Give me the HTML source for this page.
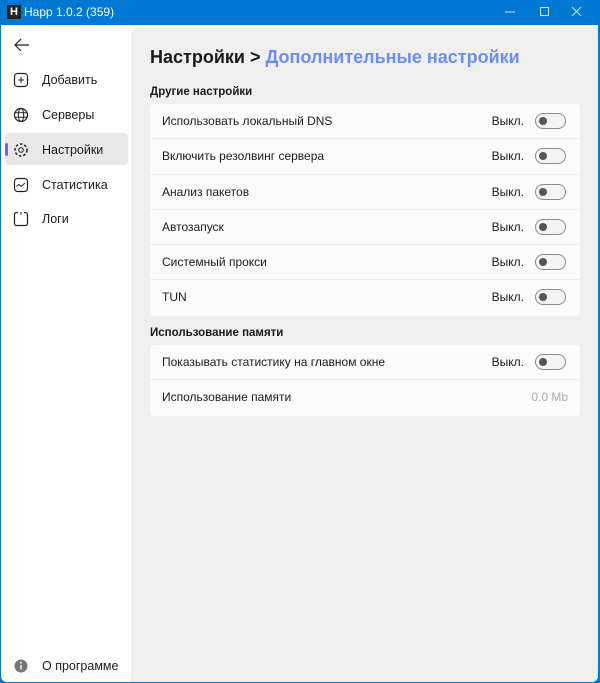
<!DOCTYPE html>
<html><head><meta charset="utf-8"><style>
*{box-sizing:border-box;margin:0;padding:0}
body{width:600px;height:683px;overflow:hidden;font-family:"Segoe UI","Liberation Sans",sans-serif;background:#0078d4;position:relative;font-size:12px;color:#1a1a1a}
.title{position:absolute;left:0;top:0;width:600px;height:25px;color:#fff;font-size:12px}
.title .logo{position:absolute;left:7px;top:5px;width:14px;height:14px;background:#222;color:#fff;font-weight:bold;font-size:11px;text-align:center;line-height:14px}
.title .t{position:absolute;left:24px;top:5px}
.win{position:absolute;left:1px;top:25px;width:597px;height:657px;background:#fff;border-radius:0 0 6px 6px;overflow:hidden}
.side{position:absolute;left:0;top:0;width:130px;height:100%}
.nav{position:absolute;left:4px;width:123px;height:32px;border-radius:4px}
.nav.sel{background:#e8e8e8}
.nav.sel:before{content:"";position:absolute;left:0;top:10px;width:3px;height:13px;background:#7a62e8;border-radius:2px}
.nav span{position:absolute;left:37px;top:10px;font-size:12.5px}
.nav svg{position:absolute;left:8px;top:9px}
.main{position:absolute;left:130px;top:3px;right:0;bottom:0;background:#efefef;border-radius:8px 0 0 0}
h1{position:absolute;left:19px;top:19px;font-size:18px;font-weight:600;color:#1a1a1a;white-space:nowrap}
h1 b{font-weight:600;color:#6d8ef0}
.h2{position:absolute;left:19px;font-size:11.5px;font-weight:600}
.card{position:absolute;left:19px;width:430px;background:#fbfbfb;border-radius:4px}
.row{height:35.3px;border-bottom:1px solid #ececec;position:relative}
.row:last-child{border-bottom:none}
.row .l{position:absolute;left:12px;top:10px;font-size:12px}
.row .v{position:absolute;right:56px;top:10px;font-size:12px}
.tg{position:absolute;right:14px;top:9px;width:31px;height:16px;border:1px solid #8a8a8a;border-radius:8px;background:#f4f4f4}
.tg:after{content:"";position:absolute;left:3px;top:3px;width:8px;height:8px;border-radius:50%;background:#555}
</style></head><body>
<div class="title"><div class="logo">H</div><div class="t">Happ 1.0.2 (359)</div>
<svg style="position:absolute;left:505px;top:6px" width="90" height="12"><line x1="0" y1="6" x2="10" y2="6" stroke="#cfe3f7"/><rect x="35.5" y="1.5" width="8" height="8" fill="none" stroke="#cfe3f7"/><path d="M67 1l9 9M76 1l-9 9" stroke="#cfe3f7"/></svg></div>
<div class="win">
<div class="side">
<svg style="position:absolute;left:13px;top:13px" width="16" height="14"><path d="M15 7H1M7 1L1 7l6 6" fill="none" stroke="#222" stroke-width="1.2"/></svg>
<div class="nav" style="top:38px"><svg width="17" height="17"><rect x="1.5" y="1.5" width="13" height="13" rx="3" fill="none" stroke="#222" stroke-width="1.2"/><path d="M8 5v6M5 8h6" stroke="#222"/></svg><span>Добавить</span></div>
<div class="nav" style="top:73px"><svg width="17" height="17"><circle cx="8" cy="8" r="6.5" fill="none" stroke="#222" stroke-width="1.2"/><ellipse cx="8" cy="8" rx="2.7" ry="6.5" fill="none" stroke="#222"/><path d="M1.5 5.8h13M1.5 10.2h13" stroke="#222"/></svg><span>Серверы</span></div>
<div class="nav sel" style="top:108px"><svg width="17" height="17"><circle cx="8" cy="8" r="2.3" fill="none" stroke="#222"/><circle cx="8" cy="8" r="6" fill="none" stroke="#222" stroke-width="1.5" stroke-dasharray="2.6 1.9"/></svg><span>Настройки</span></div>
<div class="nav" style="top:143px"><svg width="17" height="17"><rect x="1.5" y="1.5" width="13" height="13" rx="3" fill="none" stroke="#222" stroke-width="1.2"/><path d="M3.5 9.5l2.5-2 2 2 4-3.5" fill="none" stroke="#222"/></svg><span>Статистика</span></div>
<div class="nav" style="top:177px"><svg width="17" height="17"><path d="M5 1.5H3.5a2 2 0 0 0-2 2v9a2 2 0 0 0 2 2h9a2 2 0 0 0 2-2v-9a2 2 0 0 0-2-2H11" fill="none" stroke="#222" stroke-width="1.2"/><path d="M8 1v3" stroke="#222"/></svg><span>Логи</span></div>
<div class="nav" style="top:624px"><svg width="17" height="17"><circle cx="8" cy="8" r="6.5" fill="#777"/><path d="M8 7v4.5" stroke="#fff" stroke-width="1.4"/><circle cx="8" cy="4.8" r=".9" fill="#fff"/></svg><span>О программе</span></div>
</div>
<div class="main">
<h1>Настройки &gt; <b>Дополнительные настройки</b></h1>
<div class="h2" style="top:58px">Другие настройки</div>
<div class="card" style="top:76px">
<div class="row"><span class="l">Использовать локальный DNS</span><span class="v">Выкл.</span><div class="tg"></div></div>
<div class="row"><span class="l">Включить резолвинг сервера</span><span class="v">Выкл.</span><div class="tg"></div></div>
<div class="row"><span class="l">Анализ пакетов</span><span class="v">Выкл.</span><div class="tg"></div></div>
<div class="row"><span class="l">Автозапуск</span><span class="v">Выкл.</span><div class="tg"></div></div>
<div class="row"><span class="l">Системный прокси</span><span class="v">Выкл.</span><div class="tg"></div></div>
<div class="row"><span class="l">TUN</span><span class="v">Выкл.</span><div class="tg"></div></div>
</div>
<div class="h2" style="top:299px">Использование памяти</div>
<div class="card" style="top:317px">
<div class="row"><span class="l">Показывать статистику на главном окне</span><span class="v">Выкл.</span><div class="tg"></div></div>
<div class="row"><span class="l">Использование памяти</span><span class="v" style="right:12px;color:#aaa">0.0 Mb</span></div>
</div>
</div>
</div>
</body></html>
